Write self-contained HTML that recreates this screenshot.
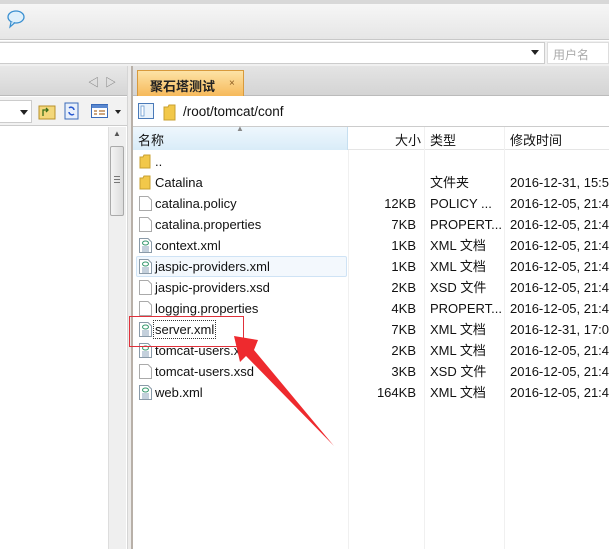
<!DOCTYPE html>
<html><head><meta charset="utf-8"><style>
*{margin:0;padding:0;box-sizing:border-box}
body{width:609px;height:549px;overflow:hidden;background:#fff;font-family:"Liberation Sans","Noto Sans CJK SC",sans-serif;font-size:12px;color:#111;position:relative}
.a{position:absolute}
.row{position:absolute;left:136px;height:21px;line-height:22px;font-size:13px;white-space:nowrap}
.ic{position:absolute;left:3px;top:3px;width:13px;height:15px}
.nm{position:absolute;left:19px}
.cell{position:absolute;height:21px;line-height:22px;font-size:13px;white-space:nowrap}
</style></head><body>
<div class="a" style="left:0;top:0;width:609px;height:4px;background:#d8d8d8"></div>
<div class="a" style="left:0;top:4px;width:609px;height:36px;background:linear-gradient(#f6f6f6,#e6e6e6);border-bottom:1px solid #c8c8c8"></div>
<svg class="a" style="left:6px;top:9px" width="20" height="20"><ellipse cx="10" cy="8" rx="8" ry="6" fill="#dff0fb" stroke="#3a8fd0" stroke-width="1.3"/><path d="M5 13 L4 18 L9 13.5" fill="#dff0fb" stroke="#3a8fd0" stroke-width="1.2"/></svg>
<div class="a" style="left:0;top:41px;width:609px;height:25px;background:#f0f0f0"></div>
<div class="a" style="left:0;top:42px;width:545px;height:22px;background:#fff;border:1px solid #ccc;border-left:none"></div>
<div class="a" style="left:531px;top:50px;width:0;height:0;border-left:4px solid transparent;border-right:4px solid transparent;border-top:5px solid #222"></div>
<div class="a" style="left:547px;top:42px;width:62px;height:22px;background:#fff;border:1px solid #ddd"></div>
<div class="a" style="left:553px;top:46px;color:#aaa;font-size:12px">用户名</div>
<div class="a" style="left:0;top:66px;width:127px;height:30px;background:linear-gradient(#e8e8e8,#d6d6d6);border-bottom:1px solid #bbb"></div>
<div class="a" style="left:88px;top:74px;color:#777;font-size:11px">◁&nbsp;&nbsp;▷</div>
<div class="a" style="left:127px;top:66px;width:6px;height:483px;background:#ecebea;border-left:1px solid #d5d5d5;border-right:2px solid #b8b0a8"></div>
<div class="a" style="left:133px;top:66px;width:476px;height:30px;background:linear-gradient(#e4e4e4,#d4d4d4);border-bottom:1px solid #bbb"></div>
<div class="a" style="left:137px;top:70px;width:107px;height:26px;background:linear-gradient(#fde3a6,#f6b95a);border:1px solid #d89a3c;border-bottom:none"></div>
<div class="a" style="left:150px;top:76px;font-weight:bold;font-size:13px;color:#222">聚石塔测试</div>
<div class="a" style="left:229px;top:78px;font-size:10px;color:#8a5a20">×</div>
<div class="a" style="left:0;top:97px;width:127px;height:29px;background:#f2f2f2;border-bottom:1px solid #ccc"></div>
<div class="a" style="left:0;top:100px;width:32px;height:23px;background:#fff;border:1px solid #ccc;border-left:none"></div>
<div class="a" style="left:20px;top:110px;border-left:4px solid transparent;border-right:4px solid transparent;border-top:5px solid #222"></div>
<svg class="a" style="left:38px;top:103px" width="18" height="17"><rect x="1" y="3" width="16" height="13" fill="#f3d77a" stroke="#b8902a"/><path d="M5 13 V7 H10 M8 5 L10 7 L8 9" fill="none" stroke="#3a6e1a" stroke-width="1.3"/></svg>
<svg class="a" style="left:64px;top:102px" width="16" height="18"><rect x="1" y="1" width="13" height="16" fill="#e8f0fb" stroke="#3a6ab8"/><path d="M5 6 A3 3 0 0 1 10 8 M10 12 A3 3 0 0 1 5 10" fill="none" stroke="#2a5ad0" stroke-width="1.5"/></svg>
<svg class="a" style="left:91px;top:104px" width="18" height="14"><rect x="0.5" y="0.5" width="16" height="13" fill="#fff" stroke="#3a6ab8"/><rect x="1" y="1" width="16" height="3" fill="#5a88d0"/><path d="M3 7 H6 M8 7 H14 M3 10 H6 M8 10 H14" stroke="#b07030" stroke-width="1.2"/></svg>
<div class="a" style="left:115px;top:110px;border-left:3px solid transparent;border-right:3px solid transparent;border-top:4px solid #222"></div>
<div class="a" style="left:108px;top:127px;width:18px;height:422px;background:#efefef;border-left:1px solid #ddd"></div>
<div class="a" style="left:113px;top:129px;font-size:8px;color:#555">▲</div>
<div class="a" style="left:110px;top:146px;width:14px;height:70px;background:linear-gradient(90deg,#f4f4f4,#dcdcdc);border:1px solid #aaa;border-radius:2px"></div>
<div class="a" style="left:114px;top:176px;width:6px;height:7px;border-top:1px solid #777;border-bottom:1px solid #777"></div>
<div class="a" style="left:114px;top:179px;width:6px;height:1px;background:#777"></div>
<div class="a" style="left:133px;top:97px;width:476px;height:30px;background:#fff;border-bottom:1px solid #ccc"></div>
<svg class="a" style="left:138px;top:103px" width="16" height="16"><rect x="0.5" y="0.5" width="15" height="15" fill="#eaf3fb" stroke="#4a7ab8"/><rect x="3" y="3" width="3" height="10" fill="#fff" stroke="#6a9ad0" stroke-width=".8"/></svg>
<svg class="a" style="left:163px;top:104px" width="14" height="17"><path d="M1 3 H5 L6 1 H12 V16 H1 Z" fill="#f2c84a" stroke="#c8a030"/></svg>
<div class="a" style="left:183px;top:104px;font-size:13.5px;color:#111">/root/tomcat/conf</div>
<div class="a" style="left:133px;top:127px;width:476px;height:23px;background:#fff;border-bottom:1px solid #e5e5e5"></div>
<div class="a" style="left:133px;top:127px;width:215px;height:23px;background:linear-gradient(#eef7fd,#d9ecf8);border-right:1px solid #c6dff0"></div>
<div class="a" style="left:138px;top:130px;font-size:13px">名称</div>
<div class="a" style="left:236px;top:124px;font-size:8px;color:#888">▲</div>
<div class="a" style="left:395px;top:130px;font-size:13px">大小</div>
<div class="a" style="left:430px;top:130px;font-size:13px">类型</div>
<div class="a" style="left:510px;top:130px;font-size:13px">修改时间</div>
<div class="a" style="left:348px;top:150px;width:1px;height:399px;background:#f0f0f0"></div>
<div class="a" style="left:424px;top:127px;width:1px;height:422px;background:#f0f0f0"></div>
<div class="a" style="left:504px;top:127px;width:1px;height:422px;background:#f0f0f0"></div>
<div class="a" style="left:136px;top:256px;width:211px;height:21px;background:#f3f8fd;border:1px solid #cfe3f5;border-radius:2px"></div>
<svg width="0" height="0" style="position:absolute"><defs>
<symbol id="fold" viewBox="0 0 13 15"><path d="M1 3 H4 L5 1 H11 V14 H1 Z" fill="#f2c84a" stroke="#c8a030"/></symbol>
<symbol id="doc" viewBox="0 0 13 15"><path d="M.5 .5 H9 L12.5 4 V14.5 H.5 Z" fill="#fff" stroke="#aaa"/></symbol>
<symbol id="xml" viewBox="0 0 13 15"><path d="M.5 .5 H9 L12.5 4 V14.5 H.5 Z" fill="#fff" stroke="#8a9aa8"/><ellipse cx="6.5" cy="5" rx="3" ry="2" fill="none" stroke="#3a9a70"/><path d="M3 9 H10 M3 11 H10 M3 13 H10" stroke="#8aa0b8"/></symbol>
</defs></svg>
<div class="row" style="top:151px"><svg class="ic"><use href="#fold"/></svg><span class="nm">..</span></div>
<div class="row" style="top:172px"><svg class="ic"><use href="#fold"/></svg><span class="nm">Catalina</span></div>
<div class="row" style="top:193px"><svg class="ic"><use href="#doc"/></svg><span class="nm">catalina.policy</span></div>
<div class="row" style="top:214px"><svg class="ic"><use href="#doc"/></svg><span class="nm">catalina.properties</span></div>
<div class="row" style="top:235px"><svg class="ic"><use href="#xml"/></svg><span class="nm">context.xml</span></div>
<div class="row" style="top:256px"><svg class="ic"><use href="#xml"/></svg><span class="nm">jaspic-providers.xml</span></div>
<div class="row" style="top:277px"><svg class="ic"><use href="#doc"/></svg><span class="nm">jaspic-providers.xsd</span></div>
<div class="row" style="top:298px"><svg class="ic"><use href="#doc"/></svg><span class="nm">logging.properties</span></div>
<div class="row" style="top:319px"><svg class="ic"><use href="#xml"/></svg><span class="nm" style="outline:1px dotted #333;line-height:17px;top:2px;padding:0 1px;left:18px">server.xml</span></div>
<div class="row" style="top:340px"><svg class="ic"><use href="#xml"/></svg><span class="nm">tomcat-users.xml</span></div>
<div class="row" style="top:361px"><svg class="ic"><use href="#doc"/></svg><span class="nm">tomcat-users.xsd</span></div>
<div class="row" style="top:382px"><svg class="ic"><use href="#xml"/></svg><span class="nm">web.xml</span></div>
<div class="cell" style="top:193px;right:193px">12KB</div>
<div class="cell" style="top:214px;right:193px">7KB</div>
<div class="cell" style="top:235px;right:193px">1KB</div>
<div class="cell" style="top:256px;right:193px">1KB</div>
<div class="cell" style="top:277px;right:193px">2KB</div>
<div class="cell" style="top:298px;right:193px">4KB</div>
<div class="cell" style="top:319px;right:193px">7KB</div>
<div class="cell" style="top:340px;right:193px">2KB</div>
<div class="cell" style="top:361px;right:193px">3KB</div>
<div class="cell" style="top:382px;right:193px">164KB</div>
<div class="cell" style="top:172px;left:430px">文件夹</div>
<div class="cell" style="top:193px;left:430px">POLICY ...</div>
<div class="cell" style="top:214px;left:430px">PROPERT...</div>
<div class="cell" style="top:235px;left:430px">XML 文档</div>
<div class="cell" style="top:256px;left:430px">XML 文档</div>
<div class="cell" style="top:277px;left:430px">XSD 文件</div>
<div class="cell" style="top:298px;left:430px">PROPERT...</div>
<div class="cell" style="top:319px;left:430px">XML 文档</div>
<div class="cell" style="top:340px;left:430px">XML 文档</div>
<div class="cell" style="top:361px;left:430px">XSD 文件</div>
<div class="cell" style="top:382px;left:430px">XML 文档</div>
<div class="cell" style="top:172px;left:510px">2016-12-31, 15:55</div>
<div class="cell" style="top:193px;left:510px">2016-12-05, 21:46</div>
<div class="cell" style="top:214px;left:510px">2016-12-05, 21:46</div>
<div class="cell" style="top:235px;left:510px">2016-12-05, 21:46</div>
<div class="cell" style="top:256px;left:510px">2016-12-05, 21:46</div>
<div class="cell" style="top:277px;left:510px">2016-12-05, 21:46</div>
<div class="cell" style="top:298px;left:510px">2016-12-05, 21:46</div>
<div class="cell" style="top:319px;left:510px">2016-12-31, 17:01</div>
<div class="cell" style="top:340px;left:510px">2016-12-05, 21:46</div>
<div class="cell" style="top:361px;left:510px">2016-12-05, 21:46</div>
<div class="cell" style="top:382px;left:510px">2016-12-05, 21:46</div>
<div class="a" style="left:129px;top:316px;width:115px;height:31px;border:1px solid #e0303a"></div>
<svg class="a" style="left:0;top:0" width="609" height="549"><path d="M234 336 L258 340 L254 350 L334 446 L246 356 L240 362 Z" fill="#ee2a2e"/></svg>
</body></html>
